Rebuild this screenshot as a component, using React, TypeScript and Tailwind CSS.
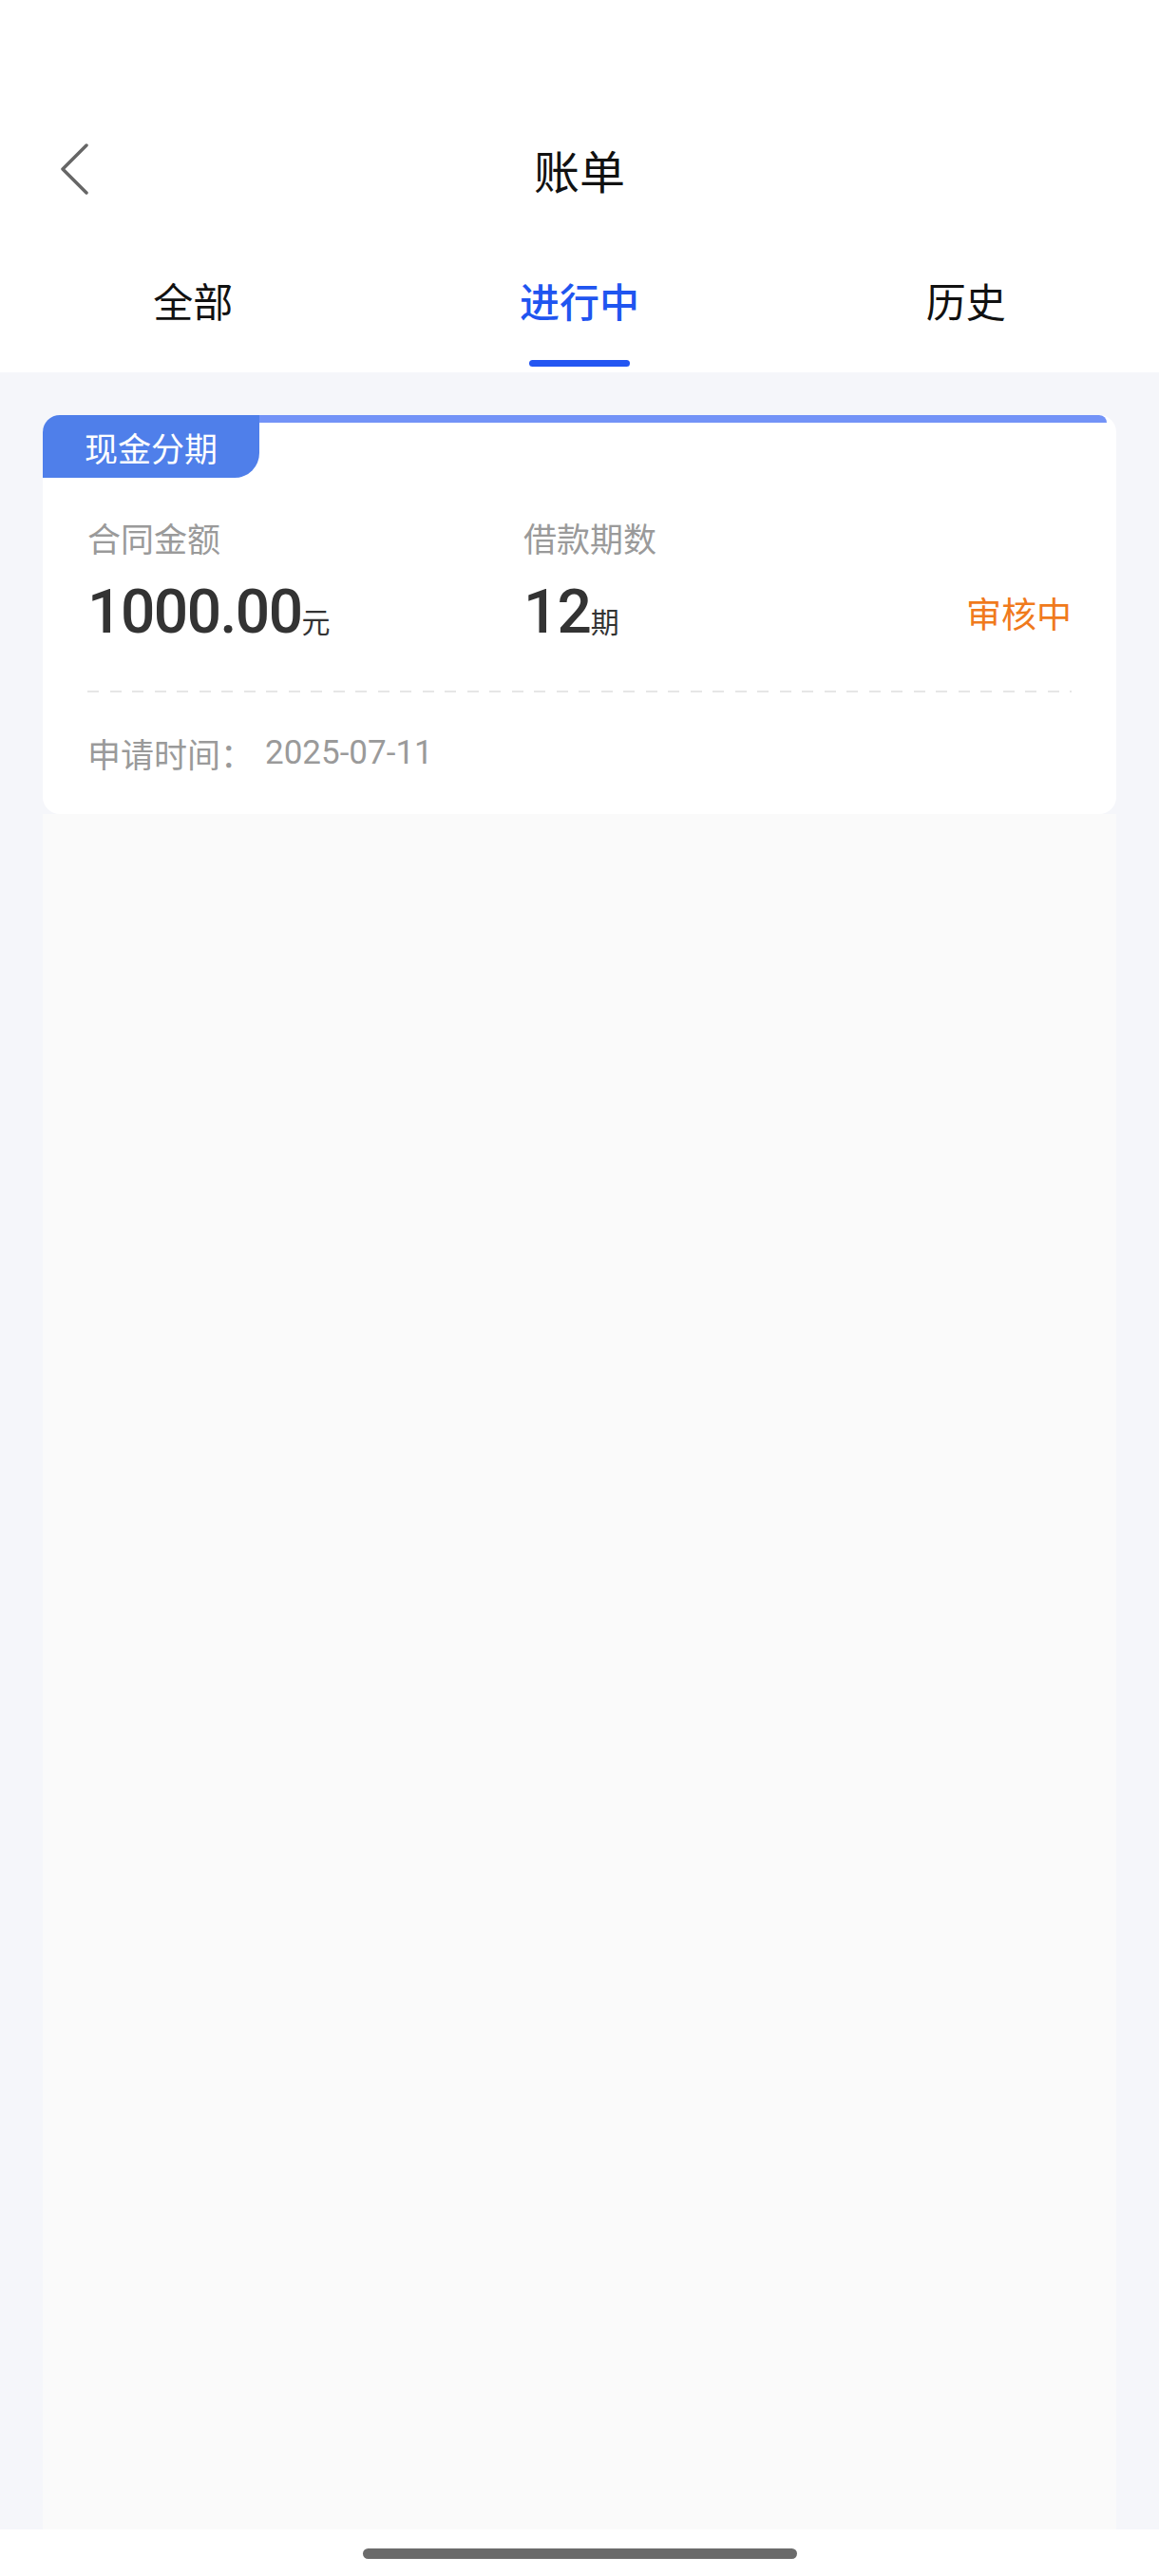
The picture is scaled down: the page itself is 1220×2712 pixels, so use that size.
const cjk = "font-['Noto_Sans_CJK_SC','Noto_Sans',sans-serif]";
const num = "font-['Roboto','Noto_Sans_CJK_SC',sans-serif]";

const tabs = ["全部", "进行中", "历史"];

function BackIcon() {
  return (
    <svg width="32" height="54" viewBox="0 0 32 54" fill="none" aria-hidden="true">
      <polyline points="29,2 4,27 29,52" stroke="#666" strokeWidth="3.5" strokeLinecap="round" strokeLinejoin="round" />
    </svg>
  );
}

function Header() {
  return (
    <header className="bg-white">
      <div className="h-[130px]" />
      <div className="relative flex h-[96px] items-center justify-center">
        <button className="absolute left-[62px] top-1/2 -translate-y-1/2" aria-label="返回">
          <BackIcon />
        </button>
        <h1 className={`${cjk} text-[48px] leading-none text-[#111]`}>账单</h1>
      </div>
      <nav className="grid h-[166px] grid-cols-3">
        {tabs.map((t, i) => {
          const active = i === 1;
          return (
            <div key={t} className="flex flex-col items-center pt-[65px]">
              <span
                className={`${cjk} text-[42px] leading-[50px] ${active ? "font-medium text-[#1f55f0]" : "text-[#111]"}`}
              >
                {t}
              </span>
              {active && <span className="mt-[38px] h-[7px] w-[106px] rounded-full bg-[#2356f2]" />}
            </div>
          );
        })}
      </nav>
    </header>
  );
}

function BillCard() {
  return (
    <div className="overflow-hidden rounded-[18px] bg-white">
      <div className="flex items-start">
        <div className="flex h-[66px] w-[228px] items-center justify-center rounded-br-[26px] bg-[#4f7fea]">
          <span className={`${cjk} text-[35px] leading-none text-white`}>现金分期</span>
        </div>
        <div className="mr-[10px] h-[8px] flex-1 rounded-tr-[10px] bg-[#7393f7]" />
      </div>

      <div className="px-[47px] pt-[42px] pb-[43px]">
        <div className="flex">
          <div className="w-[459px]">
            <div className={`${cjk} text-[35px] leading-[42px] text-[#9a9a9a]`}>合同金额</div>
            <div className="mt-[26px] leading-none text-[#333]">
              <span className={`${num} text-[64px] font-medium tracking-[-1.5px]`}>1000.00</span>
              <span className={`${cjk} text-[30px]`}>元</span>
            </div>
          </div>
          <div className="flex-1">
            <div className={`${cjk} text-[35px] leading-[42px] text-[#9a9a9a]`}>借款期数</div>
            <div className="mt-[26px] flex items-center justify-between">
              <div className="leading-none text-[#333]">
                <span className={`${num} text-[64px] font-medium tracking-[-1px]`}>12</span>
                <span className={`${cjk} text-[30px]`}>期</span>
              </div>
              <span className={`${cjk} text-[37px] leading-none text-[#f07a1c]`}>审核中</span>
            </div>
          </div>
        </div>

        <div className="mt-[50px] h-[2px] bg-[repeating-linear-gradient(90deg,#e6e6e6_0_12px,transparent_12px_23.5px)]" />

        <div className="mt-[43px] flex items-center text-[#9a9a9a]">
          <span className={`${cjk} text-[35px] leading-[42px]`}>申请时间：</span>
          <span className={`${num} ml-[12px] text-[35px] leading-[42px]`}>2025-07-11</span>
        </div>
      </div>
    </div>
  );
}

export default function App() {
  return (
    <div className="flex h-[2712px] w-[1220px] flex-col bg-white">
      <Header />
      <main className="flex h-[2271px] flex-col bg-[#f5f6fa] px-[45px] pt-[45px]">
        <BillCard />
        <div className="flex-1 bg-[#fafafa]" />
      </main>
      <footer className="flex flex-1 items-start justify-center bg-white pt-[20px]">
        <span className="h-[11px] w-[457px] rounded-full bg-[#6b6b6b]" />
      </footer>
    </div>
  );
}
